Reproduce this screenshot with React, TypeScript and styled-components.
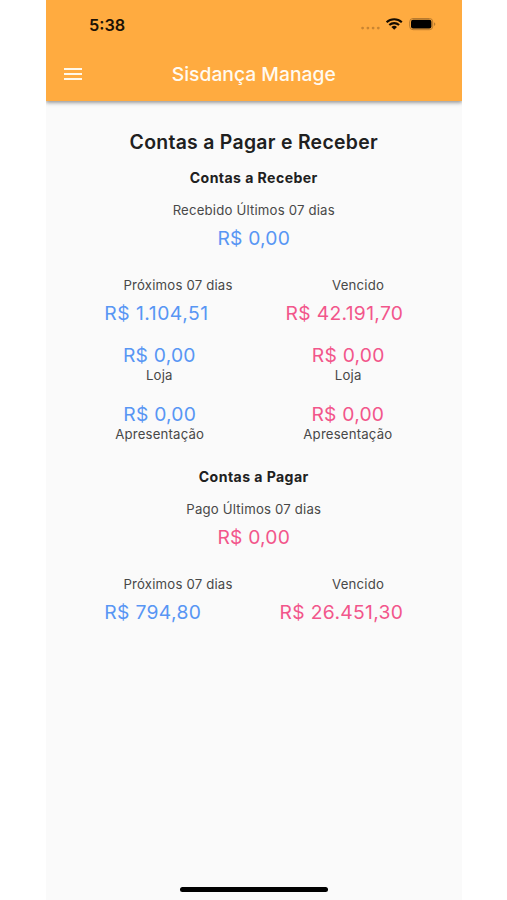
import React from "react";
import styled, { createGlobalStyle } from "styled-components";

const GlobalStyle = createGlobalStyle`
  * { box-sizing: border-box; }
  html, body { margin: 0; background: #ffffff; }
  body { font-family: Inter, "Liberation Sans", sans-serif; }
`;

const BLUE = "#5896f4";
const PINK = "#f2568b";

const Screen = styled.div`
  display: flex;
  flex-direction: column;
  width: 415.5px;
  height: 900px;
  margin-left: 46px;
  background: #fafafa;
  overflow: hidden;
`;

const Header = styled.header`
  flex: none;
  height: 101px;
  background: #ffab40;
  box-shadow: 0 2px 4px rgba(0, 0, 0, 0.3), 0 1px 3px rgba(0, 0, 0, 0.15);
`;

const StatusBar = styled.div`
  display: flex;
  align-items: center;
  justify-content: space-between;
  height: 47px;
  padding: 2px 26px 0 43px;
`;

const Clock = styled.span`
  font-size: 16.3px;
  font-weight: 600;
  line-height: 20px;
  color: #1c1206;
`;

const StatusIcons = styled.svg`
  display: block;
  width: 76px;
  height: 16px;
  margin-top: -1px;
`;

const AppBar = styled.div`
  display: grid;
  grid-template-columns: 54px 1fr 54px;
  align-items: center;
  height: 54px;
`;

const MenuButton = styled.button`
  display: flex;
  justify-content: center;
  padding: 0;
  border: 0;
  background: none;
`;

const AppTitle = styled.h1`
  margin: 0;
  font-size: 19.3px;
  font-weight: 500;
  line-height: 24px;
  text-align: center;
  white-space: nowrap;
  color: #fffaf0;
`;

const Content = styled.main`
  display: flex;
  flex: 1;
  flex-direction: column;
`;

const PageTitle = styled.h2`
  margin: 28px 0 0;
  font-size: 19.4px;
  font-weight: 600;
  line-height: 26px;
  letter-spacing: 0.3px;
  text-align: center;
  color: #202020;
`;

const Section = styled.section<{ $gap: number }>`
  display: flex;
  flex-direction: column;
  margin-top: ${(p) => p.$gap}px;
`;

const SectionTitle = styled.h3`
  margin: 0 0 12px;
  font-size: 14.1px;
  font-weight: 650;
  line-height: 20px;
  letter-spacing: 0.43px;
  text-align: center;
  color: #202020;
`;

const Summary = styled.div`
  display: flex;
  flex-direction: column;
  align-items: center;
  gap: 6px;
  margin-bottom: 25px;
`;

const Label = styled.span`
  font-size: 13.2px;
  line-height: 20px;
  letter-spacing: 0.18px;
  white-space: nowrap;
  color: #484848;
`;

const Amount = styled.span<{ $tone: string; $tracking?: number }>`
  font-size: 19.3px;
  line-height: 24px;
  letter-spacing: ${(p) => p.$tracking ?? 0.2}px;
  white-space: nowrap;
  color: ${(p) => p.$tone};
`;

const SplitRow = styled.div<{ $inset: number; $gap?: number }>`
  display: flex;
  justify-content: space-between;
  margin-top: ${(p) => p.$gap ?? 0}px;
  padding: 0 ${(p) => p.$inset}px;
`;

const Category = styled.div`
  display: flex;
  flex-direction: column;
  align-items: center;

  ${Amount} {
    line-height: 22px;
  }

  ${Label} {
    line-height: 18px;
  }
`;

const HomeArea = styled.footer`
  display: flex;
  flex: none;
  justify-content: center;
  height: 13px;
`;

const HomeIndicator = styled.div`
  width: 148px;
  height: 5px;
  border-radius: 3px;
  background: #000000;
`;

interface TotalsProps {
  next: string;
  overdue: string;
  nextTracking: number;
}

function Totals({ next, overdue, nextTracking }: TotalsProps) {
  return (
    <>
      <SplitRow $inset={77.5}>
        <Label>Próximos 07 dias</Label>
        <Label>Vencido</Label>
      </SplitRow>
      <SplitRow $inset={58.2} $gap={6}>
        <Amount $tone={BLUE} $tracking={nextTracking}>{next}</Amount>
        <Amount $tone={PINK} $tracking={0.32}>{overdue}</Amount>
      </SplitRow>
    </>
  );
}

function CategoryRow({ name, inset, gap }: { name: string; inset: number; gap: number }) {
  return (
    <SplitRow $inset={inset} $gap={gap}>
      {[BLUE, PINK].map((tone) => (
        <Category key={tone}>
          <Amount $tone={tone}>R$ 0,00</Amount>
          <Label>{name}</Label>
        </Category>
      ))}
    </SplitRow>
  );
}

export default function App() {
  return (
    <>
      <GlobalStyle />
      <Screen>
        <Header>
          <StatusBar>
            <Clock>5:38</Clock>
            <StatusIcons viewBox="0 0 76 16">
              <g fill="#c98532">
                <circle cx="2.6" cy="12.1" r="1.4" />
                <circle cx="7.9" cy="12.1" r="1.4" />
                <circle cx="13.1" cy="12.1" r="1.4" />
                <circle cx="18.3" cy="12.1" r="1.4" />
              </g>
              <g fill="none" stroke="#140c02" strokeWidth="2.1">
                <path d="M26.6 6.2 A11.2 11.2 0 0 1 41.8 6.2" />
                <path d="M29.3 9 A7.2 7.2 0 0 1 39.1 9" />
              </g>
              <path d="M31.4 11 Q34.2 8.7 37 11 L34.2 13.8 Z" fill="#140c02" />
              <rect x="49.7" y="2.5" width="23" height="11.2" rx="3.3" fill="none" stroke="#b87a2e" />
              <rect x="51" y="3.8" width="20.4" height="8.6" rx="2" fill="#000" />
              <path d="M74 6.3 Q76.8 8.1 74 9.9 Z" fill="#b87a2e" />
            </StatusIcons>
          </StatusBar>
          <AppBar>
            <MenuButton aria-label="Menu">
              <svg width="18" height="12" viewBox="0 0 18 12" fill="#fff8ea">
                <rect width="18" height="2" />
                <rect y="5" width="18" height="2" />
                <rect y="10" width="18" height="2" />
              </svg>
            </MenuButton>
            <AppTitle>Sisdança Manage</AppTitle>
          </AppBar>
        </Header>
        <Content>
          <PageTitle>Contas a Pagar e Receber</PageTitle>
          <Section $gap={13}>
            <SectionTitle>Contas a Receber</SectionTitle>
            <Summary>
              <Label>Recebido Últimos 07 dias</Label>
              <Amount $tone={BLUE}>R$ 0,00</Amount>
            </Summary>
            <Totals next="R$ 1.104,51" overdue="R$ 42.191,70" nextTracking={0.53} />
            <CategoryRow name="Loja" inset={77} gap={19} />
            <CategoryRow name="Apresentação" inset={69.2} gap={19} />
          </Section>
          <Section $gap={24}>
            <SectionTitle>Contas a Pagar</SectionTitle>
            <Summary>
              <Label>Pago Últimos 07 dias</Label>
              <Amount $tone={PINK}>R$ 0,00</Amount>
            </Summary>
            <Totals next="R$ 794,80" overdue="R$ 26.451,30" nextTracking={0.35} />
          </Section>
        </Content>
        <HomeArea>
          <HomeIndicator />
        </HomeArea>
      </Screen>
    </>
  );
}
